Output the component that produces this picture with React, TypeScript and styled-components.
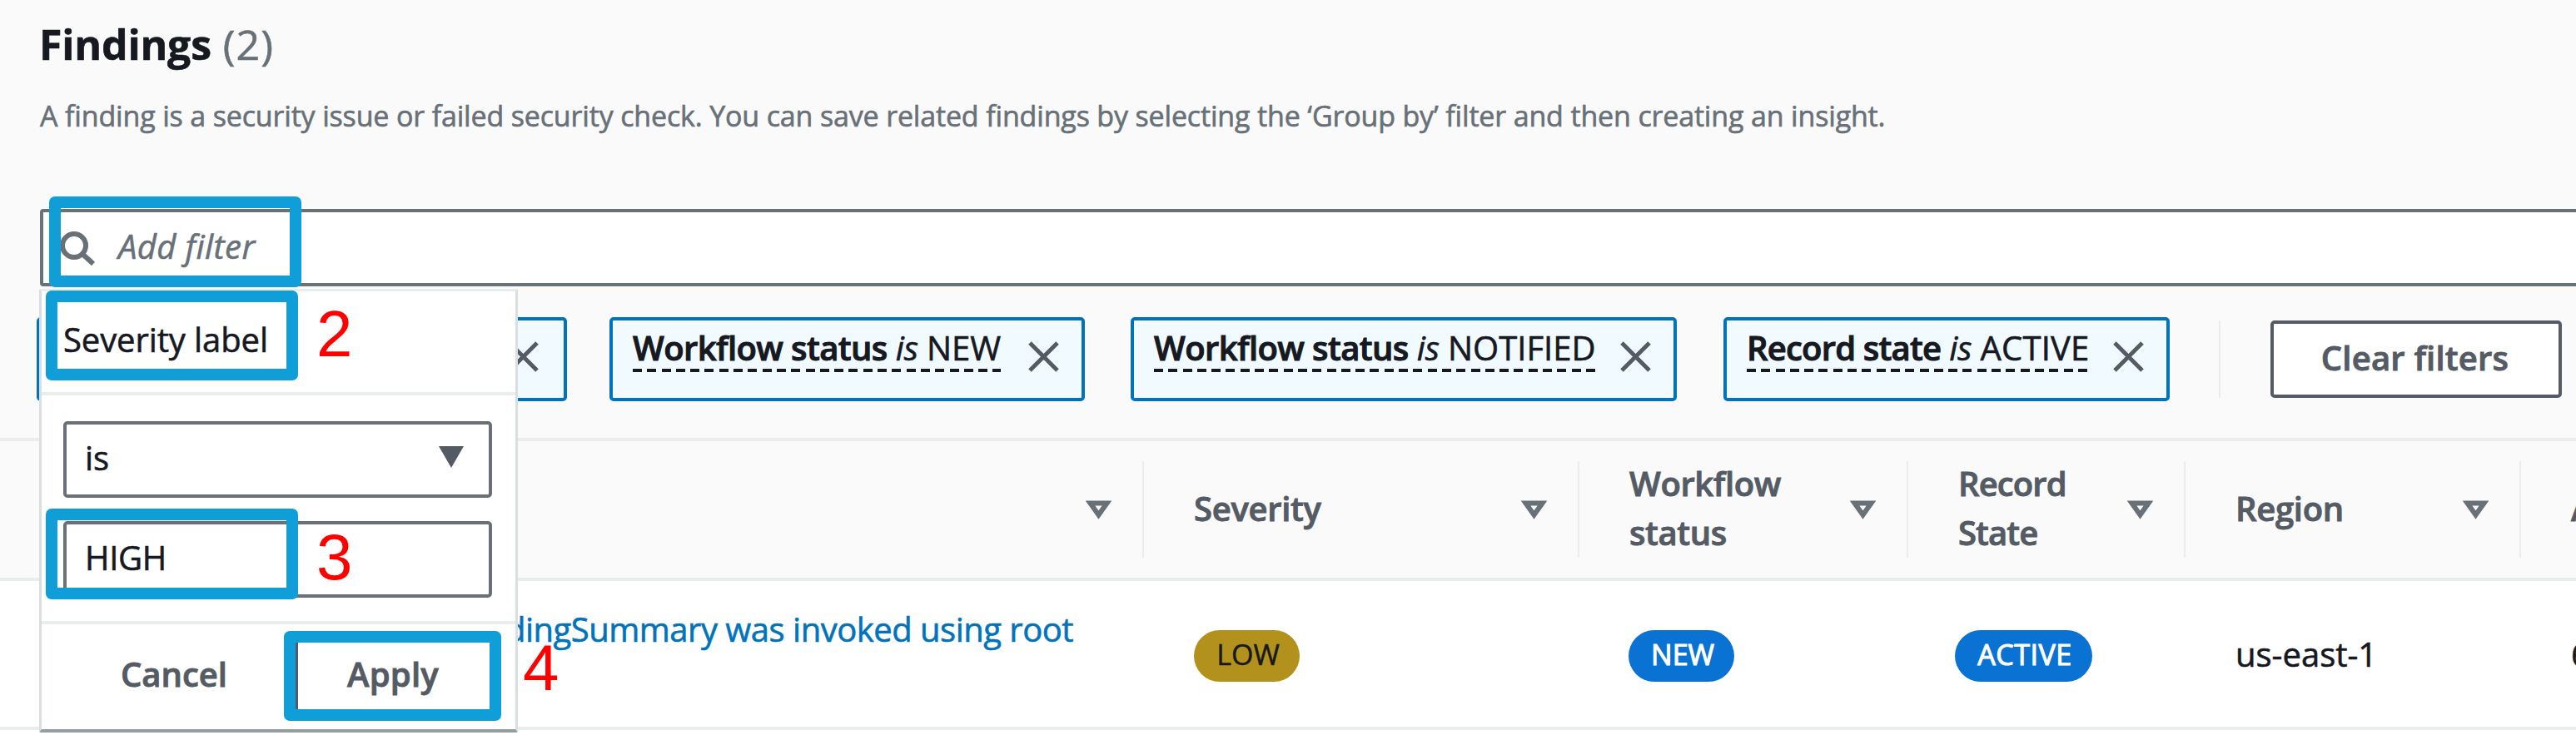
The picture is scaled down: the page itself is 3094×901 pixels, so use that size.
import React from "react";
import styled, { createGlobalStyle, css } from "styled-components";

const GlobalStyle = createGlobalStyle`
  * { box-sizing: border-box; }
  body { margin: 0; background: #fff; font-family: "Open Sans", sans-serif; }
`;

const color = {
  text: "#16191f",
  muted: "#687078",
  label: "#545b64",
  line: "#eaeded",
  link: "#0073bb",
  mark: "#109ed9",
};

const Page = styled.div`
  position: relative;
  width: 3094px;
  height: 901px;
  overflow: hidden;
  background: #fff;
  color: ${color.text};
  font-size: 40px;
  -webkit-text-stroke: 0.6px currentColor;
`;

const Text = styled.span<{ $ls?: number }>`
  display: inline-block;
  white-space: pre;
  letter-spacing: ${(p) => p.$ls ?? 0}px;
  -webkit-text-stroke-color: currentColor;
`;

/* ---------- heading and search ---------- */

const Toolbar = styled.header`
  display: flex;
  flex-direction: column;
  height: 530px;
  background: #fafafa;
  border-bottom: 4px solid ${color.line};
`;

const Title = styled.h1`
  display: flex;
  gap: 14px;
  height: 105px;
  margin: 0;
  padding-left: 47px;
  font-size: 50px;
  line-height: 107px;
  font-weight: 700;
`;

const Count = styled(Text)`
  font-weight: 400;
  color: ${color.muted};
`;

const Description = styled.p`
  margin: 0 0 78px;
  padding-left: 48px;
  font-size: 34px;
  line-height: 68px;
  color: ${color.muted};
`;

const SearchBar = styled.div`
  display: flex;
  align-items: center;
  gap: 26px;
  height: 93px;
  flex: none;
  margin: 0 -10px 0 48px;
  padding: 0 0 5px 20px;
  background: #fff;
  border: 4px solid ${color.muted};
  border-radius: 4px;
  font-style: italic;
  color: ${color.muted};
`;

const SearchIcon = styled.svg`
  width: 44px;
  height: 44px;
  margin-top: 8px;
`;

const Filters = styled.div`
  display: flex;
  align-items: center;
  gap: 51px;
  margin-top: 37px;
  padding-left: 44px;
`;

const Chip = styled.div<{ $width: number; $shift?: number }>`
  display: flex;
  justify-content: space-between;
  flex: none;
  width: ${(p) => p.$width}px;
  height: 101px;
  margin-left: ${(p) => p.$shift ?? 0}px;
  padding: 8px 27px 0 24px;
  background: #f1faff;
  border: 4px solid ${color.link};
  border-radius: 5px;
`;

const ChipLabel = styled.div`
  display: flex;
  gap: 10px;
  height: 54px;
  line-height: 50px;
  background: repeating-linear-gradient(90deg, ${color.text} 0 11px, transparent 11px 17.3px) 0 100% / 100% 4px no-repeat;
`;

const Strong = styled(Text)`
  font-weight: 600;
  -webkit-text-stroke: 1px currentColor;
`;

const Operator = styled(Text)`
  font-style: italic;
`;

const CloseIcon = styled.svg<{ $nudge?: boolean }>`
  width: 37px;
  height: 37px;
  margin-top: 17px;
  margin-right: ${(p) => (p.$nudge ? 3 : 0)}px;
`;

const Divider = styled.div`
  width: 2px;
  height: 93px;
  margin: 0 9px 0 8px;
  background: ${color.line};
`;

const buttonText = css`
  display: flex;
  align-items: center;
  justify-content: center;
  font-weight: 600;
  -webkit-text-stroke: 0.9px currentColor;
  color: ${color.label};
`;

const Button = styled.div<{ $width: number }>`
  ${buttonText}
  flex: none;
  width: ${(p) => p.$width}px;
  height: 93px;
  padding: 0 3px 5px 0;
  background: #fff;
  border: 4px solid ${color.label};
  border-radius: 5px;
`;

/* ---------- table ---------- */

const columns = "1374px 523px 395px 333px 403px 1fr";

const HeadRow = styled.div`
  display: grid;
  grid-template-columns: ${columns};
  align-items: center;
  height: 168px;
  background: #fafafa;
  border-bottom: 4px solid ${color.line};
`;

const HeadCell = styled.div`
  display: flex;
  align-items: center;
  justify-content: space-between;
  height: 116px;
  padding: 0 37px 0 60px;
  border-right: 2px solid ${color.line};
  font-weight: 600;
  -webkit-text-stroke: 0.9px currentColor;
  line-height: 59px;
  color: ${color.label};
  &:last-child { border-right: 0; padding-right: 0; }
`;

const HeadLabel = styled.div`
  display: flex;
  flex-direction: column;
  align-items: flex-start;
  padding-bottom: 4px;
`;

const SortIcon = styled.svg`
  width: 32px;
  height: 28px;
  flex: none;
`;

const BodyRow = styled.div`
  display: grid;
  grid-template-columns: ${columns};
  height: 179px;
  border-bottom: 4px solid ${color.line};
`;

const BodyCell = styled.div<{ $indent?: number }>`
  display: flex;
  align-items: center;
  padding: 0 0 0 ${(p) => p.$indent ?? 60}px;
`;

const LinkCell = styled(BodyCell)`
  align-items: flex-start;
  padding: 28px 0 0 607px;
  line-height: 59px;
  color: ${color.link};
`;

const Badge = styled.span<{ $bg: string; $fg: string; $width: number; $strong?: boolean }>`
  display: flex;
  justify-content: center;
  width: ${(p) => p.$width}px;
  height: 62px;
  margin-top: 4px;
  padding-left: 3px;
  border-radius: 31px;
  background: ${(p) => p.$bg};
  color: ${(p) => p.$fg};
  font-size: 34px;
  line-height: 58px;
  -webkit-text-stroke: ${(p) => (p.$strong ? 1.1 : 0.5)}px currentColor;
`;

/* ---------- filter menu ---------- */

const Menu = styled.div`
  position: absolute;
  left: 47px;
  top: 347px;
  width: 575px;
  height: 533px;
  background: #fff;
  border: 3px solid #d9dedf;
  border-top-color: ${color.line};
  border-bottom: 4px solid #949ea1;
  border-radius: 2px;
`;

const MenuTitle = styled.div`
  height: 125px;
  padding-left: 26px;
  line-height: 116px;
  border-bottom: 4px solid ${color.line};
`;

const MenuFields = styled.div`
  display: flex;
  flex-direction: column;
  gap: 28px;
  height: 275px;
  padding: 31px 28px 0 26px;
  border-bottom: 4px solid ${color.line};
`;

const Field = styled.div`
  display: flex;
  align-items: center;
  justify-content: space-between;
  height: 92px;
  padding: 0 30px 6px 22px;
  border: 4px solid ${color.muted};
  border-radius: 5px;
`;

const MenuActions = styled.div`
  display: flex;
  justify-content: flex-end;
  padding: 15px 26px 0 0;
`;

const CancelAction = styled.div`
  ${buttonText}
  height: 93px;
  margin-right: 81px;
  padding-bottom: 5px;
`;

/* ---------- step marks ---------- */

const Highlight = styled.div<{ $x: number; $y: number; $w: number; $h: number }>`
  position: absolute;
  left: ${(p) => p.$x}px;
  top: ${(p) => p.$y}px;
  width: ${(p) => p.$w}px;
  height: ${(p) => p.$h}px;
  border: 14px solid ${color.mark};
  border-radius: 7px;
`;

const Step = styled.div<{ $x: number; $y: number }>`
  position: absolute;
  left: ${(p) => p.$x}px;
  top: ${(p) => p.$y}px;
  font-family: "Liberation Sans", sans-serif;
  font-size: 78px;
  line-height: 78px;
  -webkit-text-stroke: 0;
  color: #f00;
`;

const Close = ({ nudge }: { nudge?: boolean }) => (
  <CloseIcon $nudge={nudge} viewBox="0 0 37 37" fill="none" stroke={color.label} strokeWidth="5">
    <path d="M2 2 35 35M35 2 2 35" />
  </CloseIcon>
);

const Sort = () => (
  <SortIcon viewBox="0 0 32 28" fill="none" stroke={color.muted} strokeWidth="6">
    <path d="M6.5 6.5H26.5L16.5 20.5Z" />
  </SortIcon>
);

type Filter = { name: string; value: string; width: number; shift: number; ls: number; vls: number };

const filters: Filter[] = [
  { name: "Workflow status", value: "NEW", width: 571, shift: 0, ls: -0.6, vls: 0 },
  { name: "Workflow status", value: "NOTIFIED", width: 656, shift: 4, ls: -0.6, vls: 0 },
  { name: "Record state", value: "ACTIVE", width: 536, shift: 5, ls: -0.8, vls: 0.2 },
];

const heads: { lines: string[]; ls: number }[] = [
  { lines: ["Severity"], ls: -0.3 },
  { lines: ["Workflow", "status"], ls: -0.4 },
  { lines: ["Record", "State"], ls: -0.9 },
  { lines: ["Region"], ls: -0.3 },
];

export default function App() {
  return (
    <Page>
      <GlobalStyle />
      <Toolbar>
        <Title>
          <Text $ls={-0.2}>Findings</Text>
          <Count $ls={1}>(2)</Count>
        </Title>
        <Description>
          <Text $ls={-0.16}>
            A finding is a security issue or failed security check. You can save related findings by selecting the ‘Group by’ filter and then creating an insight.
          </Text>
        </Description>
        <SearchBar>
          <SearchIcon viewBox="0 0 44 44" fill="none" stroke={color.muted} strokeWidth="6">
            <circle cx="17" cy="18" r="14" />
            <path d="M27 28 40 40" />
          </SearchIcon>
          <Text $ls={0.4}>Add filter</Text>
        </SearchBar>
        <Filters>
          <Chip $width={637}>
            <span />
            <Close nudge />
          </Chip>
          {filters.map((f) => (
            <Chip key={f.name + f.value} $width={f.width} $shift={f.shift}>
              <ChipLabel>
                <Strong $ls={f.ls}>{f.name}</Strong>
                <Operator>is</Operator>
                <Text $ls={f.vls}>{f.value}</Text>
              </ChipLabel>
              <Close />
            </Chip>
          ))}
          <Divider />
          <Button $width={350}>
            <Text $ls={0.2}>Clear filters</Text>
          </Button>
        </Filters>
      </Toolbar>

      <HeadRow>
        <HeadCell>
          <span />
          <Sort />
        </HeadCell>
        {heads.map((h) => (
          <HeadCell key={h.lines[0]}>
            <HeadLabel>
              {h.lines.map((l) => (
                <Text key={l} $ls={h.ls}>{l}</Text>
              ))}
            </HeadLabel>
            <Sort />
          </HeadCell>
        ))}
        <HeadCell>
          <HeadLabel>A</HeadLabel>
        </HeadCell>
      </HeadRow>

      <BodyRow>
        <LinkCell>
          <Text $ls={-0.5}>dingSummary was invoked using root</Text>
        </LinkCell>
        <BodyCell>
          <Badge $bg="#b2911c" $fg="#16191f" $width={127}>LOW</Badge>
        </BodyCell>
        <BodyCell $indent={59}>
          <Badge $bg="#0972d3" $fg="#fff" $width={127} $strong>NEW</Badge>
        </BodyCell>
        <BodyCell $indent={56}>
          <Badge $bg="#0972d3" $fg="#fff" $width={165} $strong>
            <Text $ls={0.5}>ACTIVE</Text>
          </Badge>
        </BodyCell>
        <BodyCell>
          <Text>us-east-1</Text>
        </BodyCell>
        <BodyCell>6</BodyCell>
      </BodyRow>

      <Menu>
        <MenuTitle>
          <Text $ls={-0.1}>Severity label</Text>
        </MenuTitle>
        <MenuFields>
          <Field>
            <Text>is</Text>
            <svg width="30" height="26" viewBox="0 0 30 26">
              <path d="M0 0H30L15 26Z" fill={color.label} />
            </svg>
          </Field>
          <Field>
            <Text $ls={-0.3}>HIGH</Text>
          </Field>
        </MenuFields>
        <MenuActions>
          <CancelAction>
            <Text>Cancel</Text>
          </CancelAction>
          <Button $width={239}>
            <Text $ls={0.2}>Apply</Text>
          </Button>
        </MenuActions>
      </Menu>

      <Highlight $x={59} $y={236} $w={303} $h={109} />
      <Highlight $x={55} $y={349} $w={303} $h={108} />
      <Highlight $x={55} $y={611} $w={303} $h={109} />
      <Highlight $x={341} $y={758} $w={261} $h={108} />
      <Step $x={380} $y={362}>2</Step>
      <Step $x={380} $y={630}>3</Step>
      <Step $x={628} $y={763}>4</Step>
    </Page>
  );
}
